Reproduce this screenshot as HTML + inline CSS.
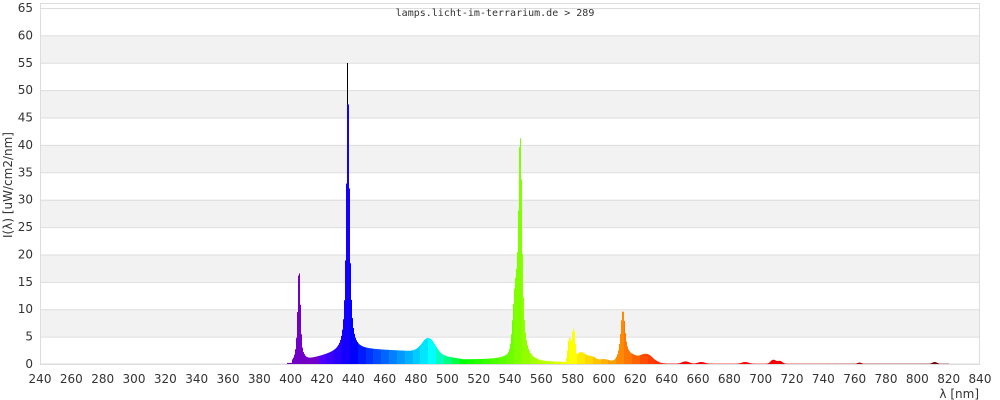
<!DOCTYPE html>
<html><head><meta charset="utf-8"><style>
html,body{margin:0;padding:0;background:#fff;width:1000px;height:400px;overflow:hidden}
svg{display:block}
text{font-family:"DejaVu Sans","Liberation Sans",sans-serif;font-size:12px;fill:#333}
</style></head><body>
<svg id="s" width="1000" height="400" xmlns="http://www.w3.org/2000/svg"></svg>
<script>
var s=document.getElementById('s'),h='';
function Y(v){return 364-v*5.477;}
function X(n){return 40+(n-240)*1.56667;}
h+='<rect x="40" y="3" width="940" height="361" fill="#fff"/>';
for(var v=0;v<65;v+=5){ if((v/5)%2==1) h+='<rect x="40" y="'+Y(v+5)+'" width="940" height="'+(5*5.477)+'" fill="#f2f2f2"/>'; }
for(var v=0;v<=65;v+=5){ h+='<line x1="40" x2="980" y1="'+(Y(v)+.5)+'" y2="'+(Y(v)+.5)+'" stroke="#ddd"/>';
 h+='<text x="33" y="'+(Y(v)+4)+'" text-anchor="end">'+v+'</text>';}
h+='<rect x="40.5" y="3.5" width="939" height="360.5" fill="none" stroke="#ddd"/>';
for(var n=240;n<=840;n+=20){h+='<text x="'+X(n)+'" y="383" text-anchor="middle">'+n+'</text>';}
function g(x,c,w,a){return a*Math.exp(-(x-c)*(x-c)/(2*w*w));}
function L(x,c,w,a){var d=(x-c)/w;return a/(1+d*d);}
function I(n){
 var v=0;
 if(n<398) return 0;
 if(n<401) return 0.2;
 v+=L(n,405.3,0.9,16.5);
 if(n>=408&&n<435) v+=0.5+(n-408)/27*2.0;
 if(n>=435&&n<480) v+=2.8-(n-435)/45*0.5;
 if(n>=480&&n<540) v+=2.3-Math.min(1,(n-480)/30)*1.5;
 v+=L(n,436.5,1.0,45);
 v+=g(n,488,4,2.8);
 if(n>=540&&n<575) v+=0.8-Math.min(1,(n-540)/20)*0.5;
 v+=L(n,546.5,1.1,38)+g(n,543.5,1.5,9)+L(n,546,4,1.5);
 v+=g(n,578,1,4.5)+g(n,580.5,0.8,5.5)+g(n,585,3,2)+g(n,592,3,1.2)+g(n,600,3,0.7);
 v+=L(n,612,1.5,9)+g(n,617,4,1.2)+g(n,627,4,1.7);
 v+=g(n,652,2,0.4)+g(n,662,2,0.3)+g(n,690,2,0.3)+g(n,708,1.5,0.7)+g(n,712,1.5,0.5)+g(n,763,1,0.2)+g(n,811,1.2,0.3);
 if(n>633&&n<820) v+=0.05;
 if(n>820) return 0;
 return v;
}
function col(w){
 var r=0,gg=0,b=0;
 if(w<440){r=Math.max(0,-(w-440)/60)*0.9;b=1;if(w<420){r=0.45;b=0.78;}}
 else if(w<490){gg=(w-440)/50;b=1;}
 else if(w<510){gg=1;b=-(w-510)/20;}
 else if(w<580){r=(w-510)/70;gg=1;}
 else if(w<645){r=1;gg=-(w-645)/65;}
 else {r=1;}
 if(w>700) r=1-(w-700)/200;
 return 'rgb('+Math.round(r*255)+','+Math.round(gg*255)+','+Math.round(b*255)+')';
}
for(var x=286;x<980;x++){
 var n=240+(x-40)/1.56667, n2=n+1/1.56667, v=0;
 for(var k=0;k<4;k++){v=Math.max(v,I(n+k*(n2-n)/4));}
 if(v<=0.02) continue;
 var q=Math.round(n/5)*5;
 var y=Y(Math.min(v,65));
 h+='<rect x="'+x+'" y="'+y+'" width="1" height="'+(364-y)+'" fill="'+col(q)+'"/>';
}
h+='<line x1="347.5" x2="347.5" y1="63" y2="104" stroke="#000"/>';
h+='<text x="495" y="16" text-anchor="middle" style="font-family:\'DejaVu Sans Mono\',\'Liberation Mono\',monospace;font-size:10px">lamps.licht-im-terrarium.de &gt; 289</text>';
h+='<text x="979" y="398" text-anchor="end">λ [nm]</text>';
h+='<text transform="translate(12,185) rotate(-90)" text-anchor="middle">I(λ)  [uW/cm2/nm]</text>';
s.innerHTML=h;
</script>
</body></html>
